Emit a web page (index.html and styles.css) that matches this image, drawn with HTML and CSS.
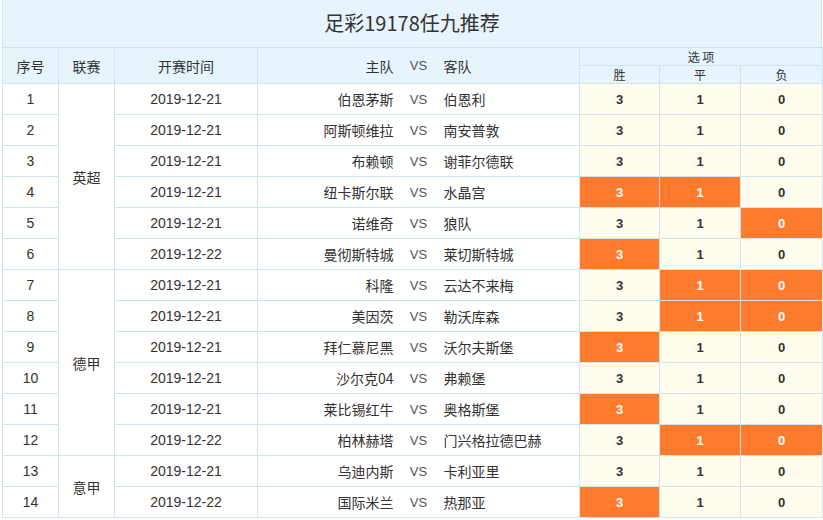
FILE: index.html
```html
<!DOCTYPE html>
<html lang="zh">
<head>
<meta charset="utf-8">
<link rel="stylesheet" href="styles.css">
</head>
<body>
<div class="wrap">
  <div class="title">足彩19178任九推荐</div>
  <table class="tbl">
    <colgroup>
      <col class="c-no"><col class="c-lg"><col class="c-dt"><col class="c-home"><col class="c-vs"><col class="c-away"><col class="c-w"><col class="c-d"><col class="c-l">
    </colgroup>
    <thead>
      <tr class="h1">
        <th rowspan="2">序号</th>
        <th rowspan="2">联赛</th>
        <th rowspan="2">开赛时间</th>
        <th rowspan="2" class="home">主队</th>
        <th rowspan="2" class="vs">VS</th>
        <th rowspan="2" class="away">客队</th>
        <th colspan="3" class="opt">选 项</th>
      </tr>
      <tr class="h2">
        <th class="sub">胜</th><th class="sub">平</th><th class="sub">负</th>
      </tr>
    </thead>
    <tbody>
      <tr><td>1</td><td rowspan="6" class="lg">英超</td><td>2019-12-21</td><td class="home">伯恩茅斯</td><td class="vs">VS</td><td class="away">伯恩利</td><td class="o">3</td><td class="o">1</td><td class="o">0</td></tr>
      <tr><td>2</td><td>2019-12-21</td><td class="home">阿斯顿维拉</td><td class="vs">VS</td><td class="away">南安普敦</td><td class="o">3</td><td class="o">1</td><td class="o">0</td></tr>
      <tr><td>3</td><td>2019-12-21</td><td class="home">布赖顿</td><td class="vs">VS</td><td class="away">谢菲尔德联</td><td class="o">3</td><td class="o">1</td><td class="o">0</td></tr>
      <tr><td>4</td><td>2019-12-21</td><td class="home">纽卡斯尔联</td><td class="vs">VS</td><td class="away">水晶宫</td><td class="o on">3</td><td class="o on">1</td><td class="o">0</td></tr>
      <tr><td>5</td><td>2019-12-21</td><td class="home">诺维奇</td><td class="vs">VS</td><td class="away">狼队</td><td class="o">3</td><td class="o">1</td><td class="o on">0</td></tr>
      <tr><td>6</td><td>2019-12-22</td><td class="home">曼彻斯特城</td><td class="vs">VS</td><td class="away">莱切斯特城</td><td class="o on">3</td><td class="o">1</td><td class="o">0</td></tr>
      <tr><td>7</td><td rowspan="6" class="lg">德甲</td><td>2019-12-21</td><td class="home">科隆</td><td class="vs">VS</td><td class="away">云达不来梅</td><td class="o">3</td><td class="o on">1</td><td class="o on">0</td></tr>
      <tr><td>8</td><td>2019-12-21</td><td class="home">美因茨</td><td class="vs">VS</td><td class="away">勒沃库森</td><td class="o">3</td><td class="o on">1</td><td class="o on">0</td></tr>
      <tr><td>9</td><td>2019-12-21</td><td class="home">拜仁慕尼黑</td><td class="vs">VS</td><td class="away">沃尔夫斯堡</td><td class="o on">3</td><td class="o">1</td><td class="o">0</td></tr>
      <tr><td>10</td><td>2019-12-21</td><td class="home">沙尔克04</td><td class="vs">VS</td><td class="away">弗赖堡</td><td class="o">3</td><td class="o">1</td><td class="o">0</td></tr>
      <tr><td>11</td><td>2019-12-21</td><td class="home">莱比锡红牛</td><td class="vs">VS</td><td class="away">奥格斯堡</td><td class="o on">3</td><td class="o">1</td><td class="o">0</td></tr>
      <tr><td>12</td><td>2019-12-22</td><td class="home">柏林赫塔</td><td class="vs">VS</td><td class="away">门兴格拉德巴赫</td><td class="o">3</td><td class="o on">1</td><td class="o on">0</td></tr>
      <tr><td>13</td><td rowspan="2" class="lg">意甲</td><td>2019-12-21</td><td class="home">乌迪内斯</td><td class="vs">VS</td><td class="away">卡利亚里</td><td class="o">3</td><td class="o">1</td><td class="o">0</td></tr>
      <tr><td>14</td><td>2019-12-22</td><td class="home">国际米兰</td><td class="vs">VS</td><td class="away">热那亚</td><td class="o on">3</td><td class="o">1</td><td class="o">0</td></tr>
    </tbody>
  </table>
</div>
</body>
</html>
```
FILE: styles.css
```css
html, body {
  margin: 0;
  padding: 0;
  background: #ffffff;
}
body {
  font-family: "Liberation Sans", "Noto Sans CJK SC", sans-serif;
  color: #333333;
}
.wrap {
  width: 820px;
  margin-left: 2px;
}
.title {
  height: 47px;
  box-sizing: border-box;
  background: #e8f4fc;
  border-left: 1px solid #d3e3ec;
  border-right: 1px solid #d3e3ec;
  text-align: center;
  font-family: "Noto Sans CJK SC", sans-serif;
  font-size: 20px;
  line-height: 45px;
  color: #333333;
}
.tbl {
  width: 820px;
  border-collapse: collapse;
  table-layout: fixed;
  font-size: 14px;
}
.c-no { width: 56px; }
.c-lg { width: 56px; }
.c-dt { width: 143px; }
.c-home { width: 144px; }
.c-vs { width: 34px; }
.c-away { width: 144px; }
.c-w { width: 80px; }
.c-d { width: 81px; }
.c-l { width: 82px; }
.tbl th, .tbl td {
  border: 1px solid #d3e3ec;
  padding: 0;
  text-align: center;
  white-space: nowrap;
}
.tbl th {
  background: #e8f4fc;
  font-weight: normal;
  font-family: "Noto Sans CJK SC", sans-serif;
  color: #333333;
}
.h1 th { height: 17px; }
.h1 th.opt { font-size: 12px; line-height: 16px; }
.h2 th { height: 17px; }
.tbl th.sub { font-size: 12px; line-height: 16px; }
.tbl td {
  height: 30px;
  font-family: "Liberation Sans", "Noto Sans CJK SC", sans-serif;
}
.tbl td.lg { font-family: "Noto Sans CJK SC", sans-serif; }
.tbl .home {
  text-align: right;
  padding-right: 8px;
  border-right: none;
  font-family: "Noto Sans CJK SC", sans-serif;
}
.tbl .vs {
  border-left: none;
  border-right: none;
  font-family: "Liberation Sans", sans-serif;
  color: #555555;
  font-size: 13px;
}
.tbl .away {
  text-align: left;
  padding-left: 8px;
  border-left: none;
  font-family: "Noto Sans CJK SC", sans-serif;
}
.tbl td.o {
  background: #fffdee;
  font-weight: bold;
  font-size: 13px;
  color: #333333;
}
.tbl td.o.on {
  background: #fe7b2d;
  color: #ffffff;
}
```
